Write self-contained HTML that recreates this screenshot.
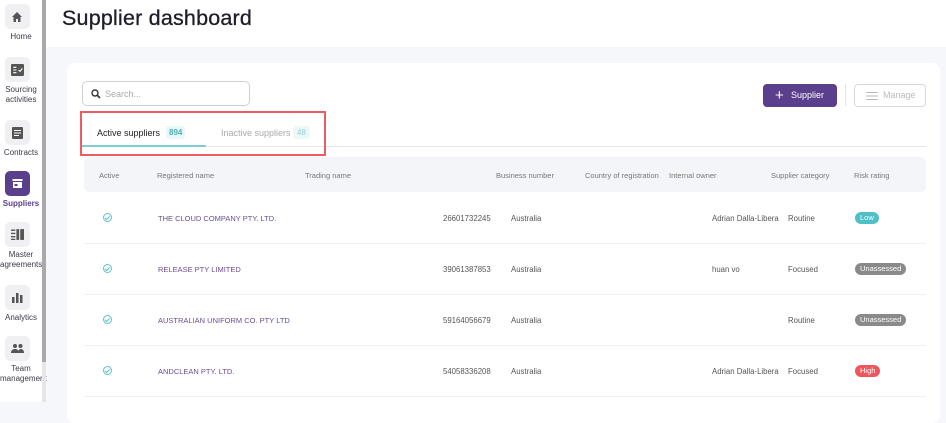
<!DOCTYPE html>
<html><head><style>
*{box-sizing:border-box;margin:0;padding:0}
body{width:946px;height:402px;overflow:hidden;font-family:"Liberation Sans",sans-serif;background:#f6f7fa;position:relative}
.sb{position:absolute;left:0;top:0;width:42px;height:402px;background:#fff}
.scr{position:absolute;left:42px;top:0;width:4px;height:402px;background:#e6e6e6}
.scr i{position:absolute;left:0;top:0;width:4px;height:362px;background:#a9a9a9}
.nav{position:absolute;left:0;width:42px;text-align:center;font-size:8px;color:#3a3a4a;line-height:10px;white-space:nowrap}
.ic{width:25px;height:25px;border-radius:5px;background:#f0f0f3;margin:0 auto 3px;position:relative;left:-4px;display:flex;align-items:center;justify-content:center}
.ic.act{background:#5a3f8d}
.hdr{position:absolute;left:46px;top:0;right:0;height:47px;background:#fff}
h1{position:absolute;left:62px;top:6px;font-size:21.5px;font-weight:normal;color:#1e1e2a;letter-spacing:.2px;-webkit-text-stroke:.3px #1e1e2a}
.card{position:absolute;left:67px;top:63px;width:873px;height:360px;background:#fff;border-radius:8px}
.abs{position:absolute}
.search{left:82px;top:81px;width:168px;height:25px;border:1px solid #cfcfd6;border-radius:5px;font-size:9px;color:#aaa;padding:7px 0 0 22px}
.red{left:80px;top:111px;width:246px;height:45px;border:2px solid #f05a63}
.th{position:absolute;top:171px;font-size:7.5px;color:#777}
.thead{left:84px;top:157px;width:842px;height:35px;background:#f4f5f9;border-radius:5px}
.row{position:absolute;left:84px;width:842px;height:1px;background:#eef0f4}
.c{position:absolute;font-size:7.8px;color:#555}
.nm{color:#6b4d93;left:158px;font-size:7.5px}
.badge{position:absolute;left:855px;height:12px;border-radius:6px;color:#fff;font-size:7.5px;line-height:12px;padding:0 5px}
.chk{position:absolute;left:103px;width:9px;height:9px;border:1.2px solid #5cc3cc;border-radius:50%}
.chk:after{content:"";position:absolute;left:2px;top:1px;width:2px;height:3.5px;border:solid #5cc3cc;border-width:0 1.2px 1.2px 0;transform:rotate(45deg)}
</style></head><body>
<div class="sb">
 <div class="nav" style="top:4px"><div class="ic"><svg width="12" height="12" viewBox="0 0 12 12"><path d="M6 1L1 6h1.5v5h2.5V8h2v3h2.5V6H11z" fill="#555"/></svg></div>Home</div>
 <div class="nav" style="top:57px"><div class="ic"><svg width="13" height="12" viewBox="0 0 12 11"><rect x="0" y="0" width="12" height="11" rx="1" fill="#555"/><path d="M2 3h3M2 5.5h3M2 8h3M7 5.5l1.3 1.3L10.5 4" stroke="#fff" stroke-width="1" fill="none"/></svg></div>Sourcing<br>activities</div>
 <div class="nav" style="top:120px"><div class="ic"><svg width="11" height="12" viewBox="0 0 11 12"><rect width="11" height="12" rx="1" fill="#555"/><path d="M2 3.5h7M2 6h7M2 8.5h5" stroke="#fff"/></svg></div>Contracts</div>
 <div class="nav" style="top:171px;color:#5a3f8d;font-weight:bold"><div class="ic act"><svg width="13" height="11" viewBox="0 0 12 11"><path d="M1 1h10v2H1zM1.5 4h9v6h-9z" fill="#fff"/><rect x="3" y="6" width="3" height="2" fill="#5a3f8d"/></svg></div>Suppliers</div>
 <div class="nav" style="top:222px"><div class="ic"><svg width="13" height="11" viewBox="0 0 12 10"><path d="M0 1h4M0 4h4M0 7h4M0 9.5h4" stroke="#555" stroke-width="1.2"/><rect x="5" y="0" width="2.5" height="10" fill="#555"/><rect x="8.5" y="0" width="3.5" height="10" fill="#555"/></svg></div>Master<br>agreements</div>
 <div class="nav" style="top:285px"><div class="ic"><svg width="11" height="11" viewBox="0 0 11 11"><rect x="0" y="5" width="2.5" height="6" fill="#555"/><rect x="4" y="1" width="2.5" height="10" fill="#555"/><rect x="8" y="3" width="2.5" height="8" fill="#555"/></svg></div>Analytics</div>
 <div class="nav" style="top:336px"><div class="ic"><svg width="13" height="9" viewBox="0 0 13 9"><circle cx="4" cy="2" r="2" fill="#555"/><circle cx="9.5" cy="2" r="2" fill="#555"/><path d="M0 9c0-3 2-4 4-4s4 1 4 4zM7 9c.3-2.5 1.5-4 2.5-4 2 0 3.5 1 3.5 4z" fill="#555"/></svg></div>Team<br>management</div>
</div>
<div class="scr"><i></i></div>
<div class="hdr"></div>
<h1>Supplier dashboard</h1>
<div class="card"></div>
<div class="abs search"><svg class="abs" style="left:8px;top:7px" width="10" height="10" viewBox="0 0 10 10"><circle cx="4" cy="4" r="3" stroke="#333" stroke-width="1.4" fill="none"/><path d="M6.2 6.2L9 9" stroke="#333" stroke-width="1.6"/></svg>Search...</div>
<div class="abs" style="left:763px;top:84px;width:74px;height:23px;background:#5a3f8d;border-radius:4px;color:#fff;font-size:9px;line-height:23px;padding-left:28px"><span class="abs" style="left:12px;top:0;font-size:15px">+</span>Supplier</div>
<div class="abs" style="left:845px;top:84px;width:1px;height:22px;background:#e4e4e8"></div>
<div class="abs" style="left:854px;top:84px;width:72px;height:23px;border:1px solid #d8d8dc;border-radius:4px;color:#bbb;font-size:9px;line-height:21px;padding-left:28px"><svg class="abs" style="left:11px;top:7px" width="12" height="8"><path d="M0 .5h12M0 4h12M0 7.5h12" stroke="#bbb"/></svg>Manage</div>
<div class="abs" style="left:82px;top:146px;width:844px;height:1px;background:#e6e7eb"></div>
<div class="abs" style="left:82px;top:145px;width:124px;height:2px;background:#7fcdd2"></div>
<div class="abs" style="left:97px;top:128px;font-size:9px;color:#222">Active suppliers</div>
<div class="abs" style="left:166px;top:126px;height:13px;padding:0 3px;background:#eaf7f8;border-radius:3px;color:#4bb0ba;font-size:8px;line-height:13px;font-weight:bold">894</div>
<div class="abs" style="left:221px;top:128px;font-size:9px;color:#aaa">Inactive suppliers</div>
<div class="abs" style="left:293px;top:126px;height:13px;padding:0 4px;background:#eef8f9;border-radius:3px;color:#8fd0d6;font-size:8px;line-height:13px">48</div>
<div class="abs red"></div>
<div class="abs thead"></div>
<div class="th" style="left:99px">Active</div><div class="th" style="left:157px">Registered name</div><div class="th" style="left:305px">Trading name</div><div class="th" style="left:496px">Business number</div><div class="th" style="left:585px">Country of registration</div><div class="th" style="left:669px">Internal owner</div><div class="th" style="left:771px">Supplier category</div><div class="th" style="left:854px">Risk rating</div>

<div class="chk" style="top:213px"></div><div class="c nm" style="top:214px">THE CLOUD COMPANY PTY. LTD.</div><div class="c" style="left:443px;top:214px">26601732245</div><div class="c" style="left:511px;top:214px">Australia</div><div class="c" style="left:712px;top:214px">Adrian Dalla-Libera</div><div class="c" style="left:788px;top:214px">Routine</div><div class="badge" style="top:212px;background:#4fbfc8">Low</div>
<div class="row" style="top:243px"></div>
<div class="chk" style="top:264px"></div><div class="c nm" style="top:265px">RELEASE PTY LIMITED</div><div class="c" style="left:443px;top:265px">39061387853</div><div class="c" style="left:511px;top:265px">Australia</div><div class="c" style="left:712px;top:265px">huan vo</div><div class="c" style="left:788px;top:265px">Focused</div><div class="badge" style="top:263px;background:#8a8a8a">Unassessed</div>
<div class="row" style="top:294px"></div>
<div class="chk" style="top:315px"></div><div class="c nm" style="top:316px">AUSTRALIAN UNIFORM CO. PTY LTD</div><div class="c" style="left:443px;top:316px">59164056679</div><div class="c" style="left:511px;top:316px">Australia</div><div class="c" style="left:788px;top:316px">Routine</div><div class="badge" style="top:314px;background:#8a8a8a">Unassessed</div>
<div class="row" style="top:345px"></div>
<div class="chk" style="top:366px"></div><div class="c nm" style="top:367px">ANDCLEAN PTY. LTD.</div><div class="c" style="left:443px;top:367px">54058336208</div><div class="c" style="left:511px;top:367px">Australia</div><div class="c" style="left:712px;top:367px">Adrian Dalla-Libera</div><div class="c" style="left:788px;top:367px">Focused</div><div class="badge" style="top:365px;background:#f0555e">High</div>
<div class="row" style="top:396px"></div>
</body></html>
